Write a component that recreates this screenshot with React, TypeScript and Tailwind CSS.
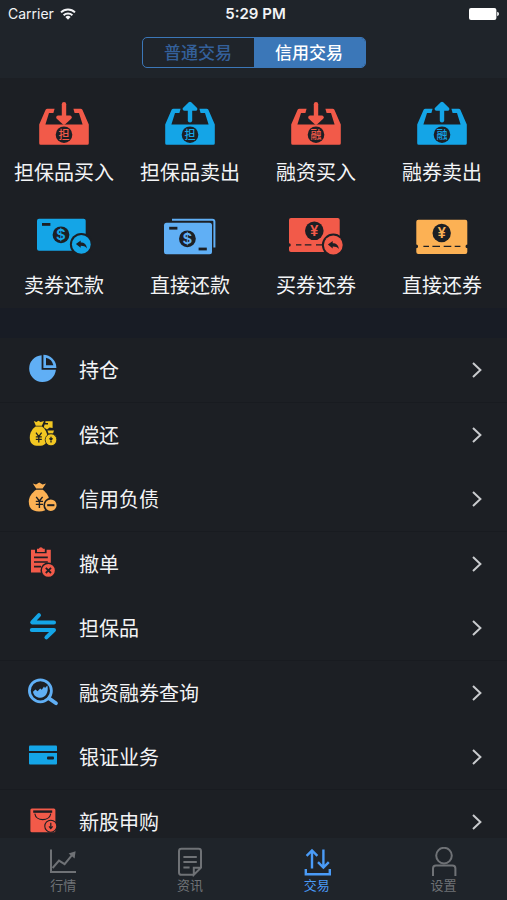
import { useState } from "react";
import type { ReactNode } from "react";
import clsx from "clsx";

const RED = "#f25a49";
const BLUE = "#14a5e7";
const SKY = "#60aff5";
const AMBER = "#fcb154";
const GOLD = "#f2c722";
const DARK = "#1c1f24";

interface ActionItem {
  label: string;
  icon: ReactNode;
}

function ActionSvg({ children }: { children: ReactNode }) {
  return (
    <svg className="h-12 w-14" viewBox="-2 0 56 48" fill="none" aria-hidden="true">
      {children}
    </svg>
  );
}

function TrayIcon({ color, mark, up }: { color: string; mark: string; up?: boolean }) {
  return (
    <ActionSvg>
      <path
        d="M1.2 26.5 7.6 11.8Q8.2 10.7 9.4 10.7H16.6L15.4 14.9H11L7.4 26.6H44.6L41 14.9H36.6L35.4 10.7H42.6Q43.8 10.7 44.4 11.8L50.8 26.5V45.2Q50.8 46.7 49.3 46.7H2.7Q1.2 46.7 1.2 45.2Z"
        fill={color}
      />
      <g stroke={color} strokeWidth="4.4" strokeLinecap="round" strokeLinejoin="round">
        {up ? (
          <>
            <path d="M26 7V22.2" />
            <path d="M20.4 11 26 5.6 31.6 11Z" fill={color} strokeWidth="3.6" />
          </>
        ) : (
          <>
            <path d="M26 6.2V22" />
            <path d="M20 19.4 26 24.8 32 19.4Z" fill={color} strokeWidth="3.6" />
          </>
        )}
      </g>
      <circle cx="26" cy="36.7" r="8.3" fill={DARK} />
      <text
        x="26"
        y="40.6"
        textAnchor="middle"
        fontSize="11"
        fontWeight="500"
        fill={color}
      >
        {mark}
      </text>
    </ActionSvg>
  );
}

function ReturnBadge({ color, cy }: { color: string; cy: number }) {
  return (
    <g transform={`translate(43.3 ${cy})`}>
      <circle r="11.4" fill={DARK} />
      <circle r="9.4" fill={color} />
      <path d="M-5.4-.4-.6-4V-1.8C3-1.8 5.2.2 5.6 4 4 2 2.2 1.4-.6 1.4V3.4Z" fill={DARK} />
    </g>
  );
}

function Coin({ cx, cy, r, color, sign }: { cx: number; cy: number; r: number; color: string; sign: string }) {
  return (
    <>
      <circle cx={cx} cy={cy} r={r} fill={DARK} />
      <text x={cx} y={cy + 5} textAnchor="middle" fontSize="15" fontWeight="600" fill={color}>
        {sign}
      </text>
    </>
  );
}

const actions: ActionItem[] = [
  { label: "担保品买入", icon: <TrayIcon color={RED} mark="担" /> },
  { label: "担保品卖出", icon: <TrayIcon color={BLUE} mark="担" up /> },
  { label: "融资买入", icon: <TrayIcon color={RED} mark="融" /> },
  { label: "融券卖出", icon: <TrayIcon color={BLUE} mark="融" up /> },
  {
    label: "卖券还款",
    icon: (
      <ActionSvg>
        <rect x="-1" y="7.7" width="48.7" height="32" rx="2" fill={BLUE} />
        <rect x="4" y="12" width="8.4" height="2.8" fill={DARK} />
        <Coin cx={23} cy={23.8} r={8.4} color={BLUE} sign="$" />
        <ReturnBadge color={BLUE} cy={33.4} />
      </ActionSvg>
    ),
  },
  {
    label: "直接还款",
    icon: (
      <ActionSvg>
        <rect x="0" y="11.8" width="48" height="31.4" rx="2.5" fill={SKY} />
        <path d="M8 8.8H48.4Q50.4 8.8 50.4 10.8V36.6" stroke={SKY} strokeWidth="2" />
        <rect x="5.2" y="15.8" width="8.2" height="2.8" fill={DARK} />
        <rect x="34.6" y="36.6" width="8.2" height="2.8" fill={DARK} />
        <Coin cx={23.4} cy={27.8} r={8.4} color={SKY} sign="$" />
      </ActionSvg>
    ),
  },
  {
    label: "买券还券",
    icon: (
      <ActionSvg>
        <path
          d="M1 7H47.7Q49.7 7 49.7 9V32.2A1.8 1.8 0 0 0 49.7 35.8V39Q49.7 41 47.7 41H1Q-1 41-1 39V35.8A1.8 1.8 0 0 0-1 32.2V9Q-1 7 1 7Z"
          fill={RED}
        />
        <path d="M6 33.8H11.4M14.8 33.8H21.4M26 33.8H32.6" stroke={DARK} strokeWidth="1.2" />
        <Coin cx={24.3} cy={19.8} r={9.3} color={RED} sign="¥" />
        <ReturnBadge color={RED} cy={34} />
      </ActionSvg>
    ),
  },
  {
    label: "直接还券",
    icon: (
      <ActionSvg>
        <path
          d="M2.3 8.8H49.3Q51.3 8.8 51.3 10.8V33.6A1.8 1.8 0 0 0 51.3 37.2V41Q51.3 43 49.3 43H2.3Q.3 43 .3 41V37.2A1.8 1.8 0 0 0 .3 33.6V10.8Q.3 8.8 2.3 8.8Z"
          fill={AMBER}
        />
        <path d="M7.4 35.4H13M16.4 35.4H24M27.7 35.4H35.3M38.7 35.4H44.4" stroke={DARK} strokeWidth="1.2" />
        <Coin cx={25.7} cy={22} r={9.2} color={AMBER} sign="¥" />
      </ActionSvg>
    ),
  },
];

function RowSvg({ children }: { children: ReactNode }) {
  return (
    <svg className="size-8 shrink-0 overflow-visible" viewBox="0 0 32 32" fill="none" aria-hidden="true">
      {children}
    </svg>
  );
}

const rows: ActionItem[] = [
  {
    label: "持仓",
    icon: (
      <RowSvg>
        <path d="M14.6 1.2A13.4 13.4 0 1 0 28.9 15.8H14.6Z" fill={SKY} />
        <path
          fillRule="evenodd"
          d="M16.4.8A13 13 0 0 1 29.4 13.9H16.4ZM19 3.8V11.2H26.4A10 10 0 0 0 19 3.8Z"
          fill={SKY}
        />
      </RowSvg>
    ),
  },
  {
    label: "偿还",
    icon: (
      <RowSvg>
        <path d="M6.8 2 9.4 3 11.4 1.8 13.6 3 17 2 14.8 6.8H8.8Z" fill={GOLD} />
        <path
          d="M8.6 7.6H15C18.4 10 20.4 14 20.4 18.2 20.4 24.4 17.6 26.8 11.6 26.8S2.8 24.4 2.8 18.2C2.8 14 5.2 10 8.6 7.6Z"
          fill={GOLD}
        />
        <path d="M16.8 8.2 17.6 5.6H21V4H18.4V2.2H25.6V9L22.6 8.6 20 10.6Z" fill={GOLD} />
        <path d="M20.4 11.6H27L26 14.4H21.6Z" fill={GOLD} />
        <ellipse cx="24" cy="20.8" rx="5.8" ry="6" fill={GOLD} stroke={DARK} strokeWidth=".8" />
        <path
          d="M9 13.6 11.8 17.6 14.6 13.6M11.8 17.6V23.4M8.8 17.8H14.8M8.8 20.4H14.8M24 17.8V23.4M22.4 19.4 24 21 25.6 19.4"
          stroke={DARK}
          strokeWidth="1.3"
        />
      </RowSvg>
    ),
  },
  {
    label: "信用负债",
    icon: (
      <RowSvg>
        <path d="M5.8.6 9 1.4 12.2-.4 15.6 1.4 19 .6 15.6 5.6H9.2Z" fill={AMBER} />
        <path
          d="M9.2 6.8H15.6C19.8 9.6 22.4 14 22.4 18.6 22.4 25.4 19.4 28.4 12.2 28.4S1.8 25.4 1.8 18.6C1.8 14 5 9.6 9.2 6.8Z"
          fill={AMBER}
        />
        <path
          d="M9.2 13.8 12.4 18 15.6 13.8M12.4 18V25M8.8 18.4H16M8.8 21.4H16"
          stroke={DARK}
          strokeWidth="1.4"
        />
        <circle cx="23.8" cy="22.2" r="6.6" fill={AMBER} stroke={DARK} strokeWidth="1.6" />
        <path d="M20.2 22.2H27.4" stroke={DARK} strokeWidth="2" />
      </RowSvg>
    ),
  },
  {
    label: "撤单",
    icon: (
      <RowSvg>
        <path d="M4 1.8H8V5.2H19.6V1.8H23.8V24.4H4Z" fill={RED} />
        <path d="M10 4V.8H11.8A2.2 2.2 0 0 1 16 .8H17.8V4Z" fill={RED} />
        <path d="M7 9.4H20.8M7 14H20.8M7 18.6H14" stroke={DARK} strokeWidth="1.6" />
        <circle cx="21.4" cy="22.4" r="7.2" fill={RED} stroke={DARK} strokeWidth="1.5" />
        <path d="M18.8 19.8 24 25M24 19.8 18.8 25" stroke={DARK} strokeWidth="1.8" />
      </RowSvg>
    ),
  },
  {
    label: "担保品",
    icon: (
      <RowSvg>
        <path
          d="M12 3.2 5.2 10.4H27M4.8 18H27L19.4 25.4"
          stroke={BLUE}
          strokeWidth="4"
          strokeLinecap="round"
          strokeLinejoin="round"
        />
      </RowSvg>
    ),
  },
  {
    label: "融资融券查询",
    icon: (
      <RowSvg>
        <circle cx="13.4" cy="13.8" r="11" stroke={SKY} strokeWidth="2.8" />
        <path d="M22 21.4 29 26.2" stroke={SKY} strokeWidth="3.8" strokeLinecap="round" />
        <path
          d="M6 14.8 8.4 12.6 10.6 14.2 13.2 11.4 14.8 12.8 17 9.6 18 11 20.4 8.6C22 15.4 18.4 20.8 13.4 20.8 9.4 20.8 6.4 18.2 6 14.8Z"
          fill={SKY}
        />
      </RowSvg>
    ),
  },
  {
    label: "银证业务",
    icon: (
      <RowSvg>
        <path d="M3 4.6H29Q30 4.6 30 5.6V10H2V5.6Q2 4.6 3 4.6Z" fill={BLUE} />
        <path d="M2 12H30V22.4Q30 23.4 29 23.4H3Q2 23.4 2 22.4Z" fill={BLUE} />
        <rect x="20" y="15.6" width="7" height="2.8" rx="1" fill={DARK} />
      </RowSvg>
    ),
  },
  {
    label: "新股申购",
    icon: (
      <RowSvg>
        <rect x="3.4" y="2.6" width="25" height="23.6" rx="1.5" fill={RED} />
        <rect x="6.2" y="4.4" width="19" height="2.4" fill={DARK} />
        <path d="M7.8 7.6C9 15.6 22.4 15.6 23.8 7.6" stroke={DARK} strokeWidth="1.1" />
        <circle cx="23.8" cy="20.2" r="6" fill={RED} stroke={DARK} strokeWidth="1.1" />
        <path d="M23.8 16.8V22M22 20.4 23.8 22.6 25.6 20.4" stroke={DARK} strokeWidth="1.2" />
      </RowSvg>
    ),
  },
];

function TabSvg({ children }: { children: ReactNode }) {
  return (
    <svg
      className="h-[30px] w-7"
      viewBox="0 0 28 30"
      fill="none"
      stroke="currentColor"
      strokeWidth="2"
      aria-hidden="true"
    >
      {children}
    </svg>
  );
}

const tabs: ActionItem[] = [
  {
    label: "行情",
    icon: (
      <TabSvg>
        <path d="M2 2.4V25H27" />
        <path d="M3.6 21 10 13.6 15.6 17.2 23.6 7.4" />
        <path d="M26.6 4.2 19.6 6.4 25.6 11.6Z" fill="currentColor" stroke="none" />
      </TabSvg>
    ),
  },
  {
    label: "资讯",
    icon: (
      <TabSvg>
        <path d="M17.8 27.8H5.4Q3 27.8 3 25.4V4.2Q3 1.8 5.4 1.8H22.6Q25 1.8 25 4.2V20.6L17.8 27.8V20.8H25" />
        <path d="M7.4 10H20.8M7.4 15H20.8M7.4 20.4H13.6" />
      </TabSvg>
    ),
  },
  {
    label: "交易",
    icon: (
      <TabSvg>
        <path d="M9 21.4V3.4M3.6 8.8 9 3.4 14.4 8.8M20.4 2.6V20.6M15 15.2 20.4 20.6 25.8 15.2M2.8 22V27.2H26.8V22" strokeWidth="2.4" />
      </TabSvg>
    ),
  },
  {
    label: "设置",
    icon: (
      <TabSvg>
        <circle cx="14" cy="8.6" r="7.8" />
        <path d="M3 29V21.4Q3 18.4 6 18.4H22.4Q25.4 18.4 25.4 21.4V29" />
      </TabSvg>
    ),
  },
];

function StatusBar() {
  return (
    <div className="grid h-7 grid-cols-3 items-center px-2 text-sm text-gray-100">
      <div className="flex items-center gap-1.5">
        <span>Carrier</span>
        <svg className="h-3 w-4" viewBox="0 0 16 12" fill="none" aria-hidden="true">
          <path d="M1 4.4A10 10 0 0 1 15 4.4M3.6 7.2A6.4 6.4 0 0 1 12.4 7.2" stroke="currentColor" strokeWidth="1.9" />
          <path d="M5.4 9A3.8 3.8 0 0 1 10.6 9L8 11.8Z" fill="currentColor" />
        </svg>
      </div>
      <span className="pl-1 text-center text-[15px] font-semibold">5:29 PM</span>
      <svg className="h-3 w-[30px] justify-self-end" viewBox="0 0 30 12" aria-hidden="true">
        <rect x="0" y="0" width="27.4" height="12" rx="2" fill="#fff" />
        <path d="M28.2 3.8Q30 4.4 30 6T28.2 8.2Z" fill="#fff" />
      </svg>
    </div>
  );
}

export default function App() {
  const [mode, setMode] = useState("信用交易");
  const [activeTab, setActiveTab] = useState("交易");

  return (
    <div className="flex h-screen flex-col bg-[#1c1f24] font-['Inter','Noto_Sans_CJK_SC',sans-serif] text-gray-100">
      <header className="h-[78px] shrink-0 bg-[#1f242a]">
        <StatusBar />
        <div className="mx-auto mt-[9px] grid h-[31px] w-56 grid-cols-2 overflow-hidden rounded-[5px] border border-[#3b77b8]">
          {["普通交易", "信用交易"].map((name) => (
            <button
              key={name}
              type="button"
              onClick={() => setMode(name)}
              className={clsx(
                "pt-0.5 text-[17px] leading-none font-medium",
                mode === name ? "bg-[#3b77b8] text-white" : "text-[#34609a]"
              )}
            >
              {name}
            </button>
          ))}
        </div>
      </header>

      <main className="flex-1 overflow-y-auto [scrollbar-width:none]">
        {/* Quick actions */}
        <section className="grid grid-cols-4 gap-y-6 pt-5 pr-0.5 pb-2 pl-px">
          {actions.map((item) => (
            <button key={item.label} type="button" className="flex flex-col items-center gap-[13px]">
              {item.icon}
              <span className="text-xl leading-7 whitespace-nowrap">{item.label}</span>
            </button>
          ))}
        </section>

        <div className="h-[30px] bg-[#181c25]" />

        {/* Menu */}
        <ul>
          {rows.map((item) => (
            <li key={item.label} className="border-[#181b20] odd:border-b">
              <a href="#" className="flex h-16 items-center gap-5 pr-[25px] pl-[27px]">
                {item.icon}
                <span className="flex-1 pt-0.5 text-xl leading-7">{item.label}</span>
                <svg className="h-4 w-2.5" viewBox="0 0 10 16" fill="none" aria-hidden="true">
                  <path d="M1 1 8.4 8 1 15" stroke="#c9cbce" strokeWidth="2" />
                </svg>
              </a>
            </li>
          ))}
        </ul>
      </main>

      <nav className="grid h-[62px] shrink-0 grid-cols-4 bg-[#1f242a] pt-[9px]">
        {tabs.map((tab) => (
          <button
            key={tab.label}
            type="button"
            onClick={() => setActiveTab(tab.label)}
            className={clsx(
              "flex flex-col items-center",
              activeTab === tab.label ? "text-[#4a9bf7]" : "text-[#6f7276]"
            )}
          >
            {tab.icon}
            <span className="text-[13px] leading-4">{tab.label}</span>
          </button>
        ))}
      </nav>
    </div>
  );
}
